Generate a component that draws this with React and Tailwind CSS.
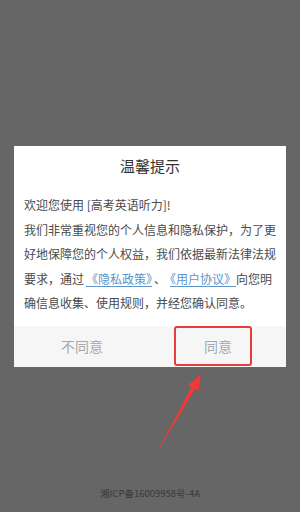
export default function App() {
  return (
    <div
      className="relative flex h-[512px] w-[300px] flex-col bg-[#666666]"
      style={{ fontFamily: '"Noto Sans CJK SC", "Noto Sans", sans-serif' }}
    >
      {/* Dialog */}
      <div className="mx-[14px] mt-[146px] bg-white">
        <div className="pt-[10px] text-center text-[15px] leading-[20px] text-[#333333]">温馨提示</div>
        <div className="px-[10px] pt-[17px] pb-[10px] text-[12px] leading-[24.5px] text-[#4a4a4a] whitespace-nowrap">
          <div>欢迎您使用 [高考英语听力]!</div>
          <div>我们非常重视您的个人信息和隐私保护，为了更</div>
          <div>好地保障您的个人权益，我们依据最新法律法规</div>
          <div>
            要求，通过
            <span className="pl-[2px] text-[#5b95c9] underline underline-offset-2">《隐私政策》</span>
            <span className="mx-[2px]">、</span>
            <span className="pl-[2px] text-[#5b95c9] underline underline-offset-2">《用户协议》</span>
            向您明
          </div>
          <div>确信息收集、使用规则，并经您确认同意。</div>
        </div>
        <div className="flex h-[41px] bg-[#f6f6f6] text-[14px]">
          <button className="flex flex-1 items-center justify-center text-[#a8a8a8]">不同意</button>
          <button className="relative flex flex-1 items-center justify-center text-[#9eabb9]">
            同意
            <span className="absolute left-[24px] top-0 h-[40px] w-[78px] rounded-[3px] border-2 border-[#e83b3b]" />
          </button>
        </div>
      </div>

      <div className="flex-1" />

      {/* Footer */}
      <div className="pb-[13px] text-center text-[9.5px] leading-[12px] text-[#3a3a3a]">湘ICP备16009958号-4A</div>

      {/* Annotation arrow */}
      <svg className="pointer-events-none absolute left-0 top-0" width="300" height="512" viewBox="0 0 300 512">
        <polygon
          points="155,456 191.5,387 188,385 201,374 198.5,391 195,389"
          fill="#f03a3a"
        />
      </svg>
    </div>
  )
}
